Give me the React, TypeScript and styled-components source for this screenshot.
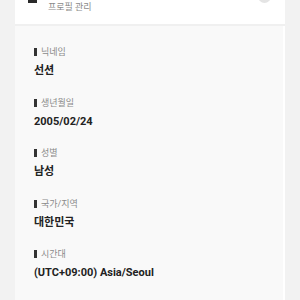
import * as React from 'react'
import styled, { createGlobalStyle } from 'styled-components'

const Global = createGlobalStyle`
  html, body {
    margin: 0;
    padding: 0;
    background: #f2f2f2;
    font-family: Roboto, "Noto Sans CJK KR", sans-serif;
  }
`

const Card = styled.div`
  margin: -20px 15px 0;
  width: 270px;
  background: #fff;
  min-height: 330px;
`

const Header = styled.header`
  display: flex;
  align-items: flex-start;
  height: 46px;
  padding: 0 14px 0 13px;
  box-sizing: border-box;
  border-bottom: 2px solid #f0f0f0;
`

const MenuIcon = styled.div`
  width: 9px;
  height: 19px;
  margin-top: 4px;
  background: #2a2a2a;
  margin-right: 11px;
`

const Subtitle = styled.div`
  flex: 1;
  padding-top: 21px;
  font-size: 9px;
  color: #8a8a8a;
  line-height: 12px;
`

const CloseBtn = styled.div`
  width: 13px;
  height: 13px;
  margin-top: 10px;
  border-radius: 50%;
  background: #e4e4e4;
`

const Body = styled.section`
  background: #f9f9f9;
  margin-right: 2px;
  padding: 20px 19px 20px;
  display: flex;
  flex-direction: column;
  gap: 17.5px;
  min-height: 300px;
`

const Field = styled.div`
  display: flex;
  flex-direction: column;
`

const Label = styled.div`
  display: flex;
  align-items: center;
  gap: 4px;
  font-size: 9px;
  line-height: 12px;
  color: #8a8a8a;
  &::before {
    content: '';
    width: 3px;
    height: 8px;
    background: #333;
  }
`

const Value = styled.div`
  margin-top: 5px;
  font-size: 11px;
  line-height: 16px;
  font-weight: 700;
  color: #222;
`

const fields = [
  ['닉네임', '선션'],
  ['생년월일', '2005/02/24'],
  ['성별', '남성'],
  ['국가/지역', '대한민국'],
  ['시간대', '(UTC+09:00) Asia/Seoul'],
]

const App = () => (
  <>
    <Global />
    <Card>
      <Header>
        <MenuIcon />
        <Subtitle>프로필 관리</Subtitle>
        <CloseBtn />
      </Header>
      <Body>
        {fields.map(([label, value]) => (
          <Field key={label}>
            <Label>{label}</Label>
            <Value>{value}</Value>
          </Field>
        ))}
      </Body>
    </Card>
  </>
)

export default App
